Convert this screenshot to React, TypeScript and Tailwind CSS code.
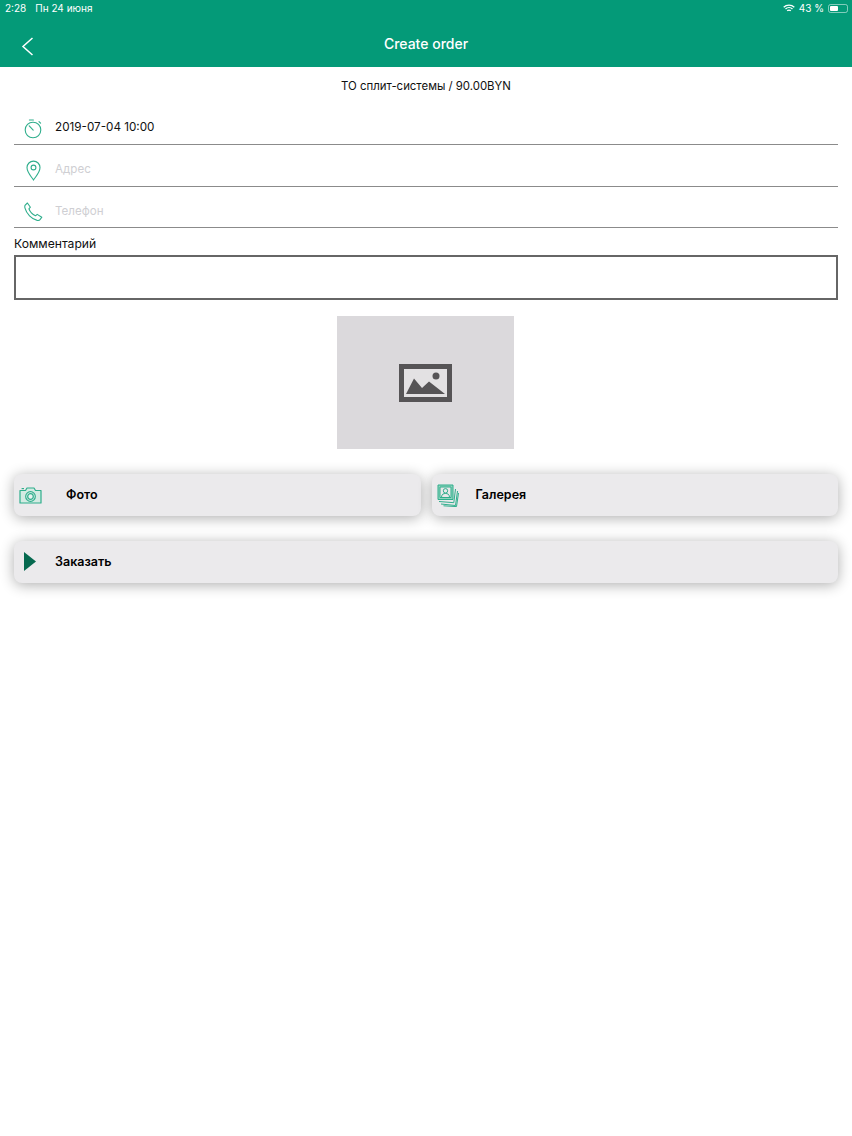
const font = "[font-family:Inter,'Liberation_Sans',sans-serif]";

function TimerIcon() {
  return (
    <svg width="20" height="20" viewBox="0 0 20 20" fill="none" stroke="#2fae8c" strokeWidth="1.1" strokeLinecap="round">
      <circle cx="10" cy="11" r="7.8" />
      <path d="M6.400 1h4M16 2.600l1.600 1.600M6.200 6.800l4 4.400" />
    </svg>
  );
}

function PinIcon() {
  return (
    <svg width="15" height="21" viewBox="0 0 15 21" fill="none" stroke="#2fae8c" strokeWidth="1.1">
      <path d="M7.500 20C5 16.200 1 12.400 1 7.600a6.500 6.500 0 0 1 13 0C14 12.400 10 16.200 7.500 20Z" />
      <circle cx="7.500" cy="7.500" r="2.400" />
    </svg>
  );
}

function PhoneIcon() {
  return (
    <svg width="19" height="19" viewBox="0 0 19 19" fill="none" stroke="#2fae8c" strokeWidth="1.1" strokeLinejoin="round">
      <path d="M1.200 3.200 3.400 1l3 4.200-1.500 1.600c1 2.800 3.600 5.600 6.600 7l1.700-1.400 4.600 2.800-1.600 2.200c-.7.900-1.800 1.200-3 1C7.600 17.200 2.400 11.600 1 6.200c-.3-1.200-.4-2.200.2-3Z" />
    </svg>
  );
}

function CameraIcon() {
  return (
    <svg width="23" height="17" viewBox="0 0 23 17" fill="none" stroke="#2fae8c" strokeWidth="1.200" strokeLinejoin="round">
      <path d="M1 3.500h5.500l1.500-2.500h7l1.500 2.500H22v12.500H1Z" fill="#d3ebe3" />
      <circle cx="11.500" cy="9.500" r="4.800" fill="#e9f3f0" />
      <circle cx="11.500" cy="9.500" r="2.800" />
      <path d="M2.600 1.600h2.400" />
    </svg>
  );
}

function GalleryIcon() {
  return (
    <svg width="22" height="23" viewBox="0 0 22 23" fill="none" stroke="#2fae8c" strokeWidth="1">
      <path d="M1 1h15v14.500H1Z" fill="#8fd3bd" />
      <path d="M3 3h11v10.500H3Z" fill="#e9e8ea" />
      <circle cx="8.500" cy="6.800" r="2.200" />
      <path d="M4.500 13c.3-3 2-3.500 4-3.500s3.700.5 4 3.500" />
      <path d="M2 17.500l14.800 1.200L18.500 5M4 20l14.500 1.500L20.500 7M6.500 21.800l13 .8L21.500 9" />
    </svg>
  );
}

function ImagePlaceholder() {
  return (
    <svg width="53" height="38" viewBox="0 0 53 38">
      <rect x="2.500" y="2.500" width="48" height="33" fill="#e3e1e3" stroke="#565456" strokeWidth="5" />
      <path d="M7 30l8-15.500 8 9.500 7-6.500 16 12.500Z" fill="#565456" />
      <circle cx="37" cy="12" r="3.500" fill="#565456" />
    </svg>
  );
}

function Field({ icon, text, muted }: { icon: React.ReactNode; text: string; muted?: boolean }) {
  return (
    <div className="flex h-[41.500px] items-center border-b border-[#8b8b8b]">
      <div className="flex w-[41px] justify-center pr-[3px] pt-[10px]">{icon}</div>
      <span className={muted ? "pt-[9px] text-[11.600px] text-[#cfcfd3]" : "pt-[9px] text-[11.700px] text-[#111]"}>{text}</span>
    </div>
  );
}

function ActionButton({ children, className }: { children: React.ReactNode; className?: string }) {
  return (
    <button
      type="button"
      className={`flex h-[42px] items-center rounded-lg bg-[#ebeaec] text-[12.500px] font-semibold text-black shadow-[0_2px_14px_rgba(0,0,0,0.32)] ${className ?? ""}`}
    >
      {children}
    </button>
  );
}

export default function App() {
  return (
    <div className={`${font} flex h-[1136px] w-[852px] flex-col bg-white`}>
      <div className="h-[67px] bg-[#049a78] text-white">
        <div className="flex h-[16px] items-center justify-between pl-[5px] pr-[4px] pt-[1px] text-[10px]">
          <div className="flex gap-[9px]">
            <span>2:28</span>
            <span>Пн 24 июня</span>
          </div>
          <div className="flex items-center gap-[4px]">
            <svg width="12" height="9" viewBox="0 0 12 9" fill="none" stroke="white" strokeWidth="1.300">
              <path d="M.7 3.200a7.600 7.600 0 0 1 10.600 0M2.500 5a5 5 0 0 1 7 0M4.200 6.800a2.500 2.500 0 0 1 3.600 0" />
            </svg>
            <span>43 %</span>
            <div className="flex h-[9px] w-[20px] items-center rounded-[2.500px] border border-white/50 p-[1px]">
              <div className="h-full w-[8px] rounded-[1px] bg-white" />
            </div>
          </div>
        </div>
        <div className="relative flex h-[51px] items-center justify-center pt-[3px]">
          <svg className="absolute left-[21px] top-[21px]" width="13" height="19" viewBox="0 0 13 19" fill="none" stroke="white" strokeWidth="1.500">
            <path d="M11.500 1 2 9.500 11.500 18" />
          </svg>
          <span className="text-[14px] font-medium">Create order</span>
        </div>
      </div>

      <div className="flex flex-col px-[14px]">
        <p className="pt-[11px] text-center text-[11.400px] leading-[16px] text-[#111]">ТО сплит-системы / 90.00BYN</p>
        <div className="mt-[9.500px]">
          <Field icon={<TimerIcon />} text="2019-07-04 10:00" />
          <Field icon={<PinIcon />} text="Адрес" muted />
          <Field icon={<PhoneIcon />} text="Телефон" muted />
        </div>
        <p className="mt-[8px] text-[12.150px] leading-[15px] text-[#111]">Комментарий</p>
        <div className="mt-[4px] h-[45px] border-2 border-[#666]" />
        <div className="mr-[2px] mt-[16px] flex h-[133px] w-[177px] items-center justify-center self-center bg-[#dbd9dc]">
          <ImagePlaceholder />
        </div>
        <div className="mt-[25px] flex gap-[11px]">
          <ActionButton className="flex-1 pl-[5px]">
            <CameraIcon />
            <span className="ml-[24px]">Фото</span>
          </ActionButton>
          <ActionButton className="flex-1 pl-[5px]">
            <GalleryIcon />
            <span className="ml-[17px]">Галерея</span>
          </ActionButton>
        </div>
        <ActionButton className="mt-[25px] pl-[10px]">
          <svg className="mb-[2px]" width="13" height="19" viewBox="0 0 13 19">
            <path d="M0 0l12 9.500L0 19Z" fill="#06694f" />
          </svg>
          <span className="ml-[18px]">Заказать</span>
        </ActionButton>
      </div>
    </div>
  );
}
